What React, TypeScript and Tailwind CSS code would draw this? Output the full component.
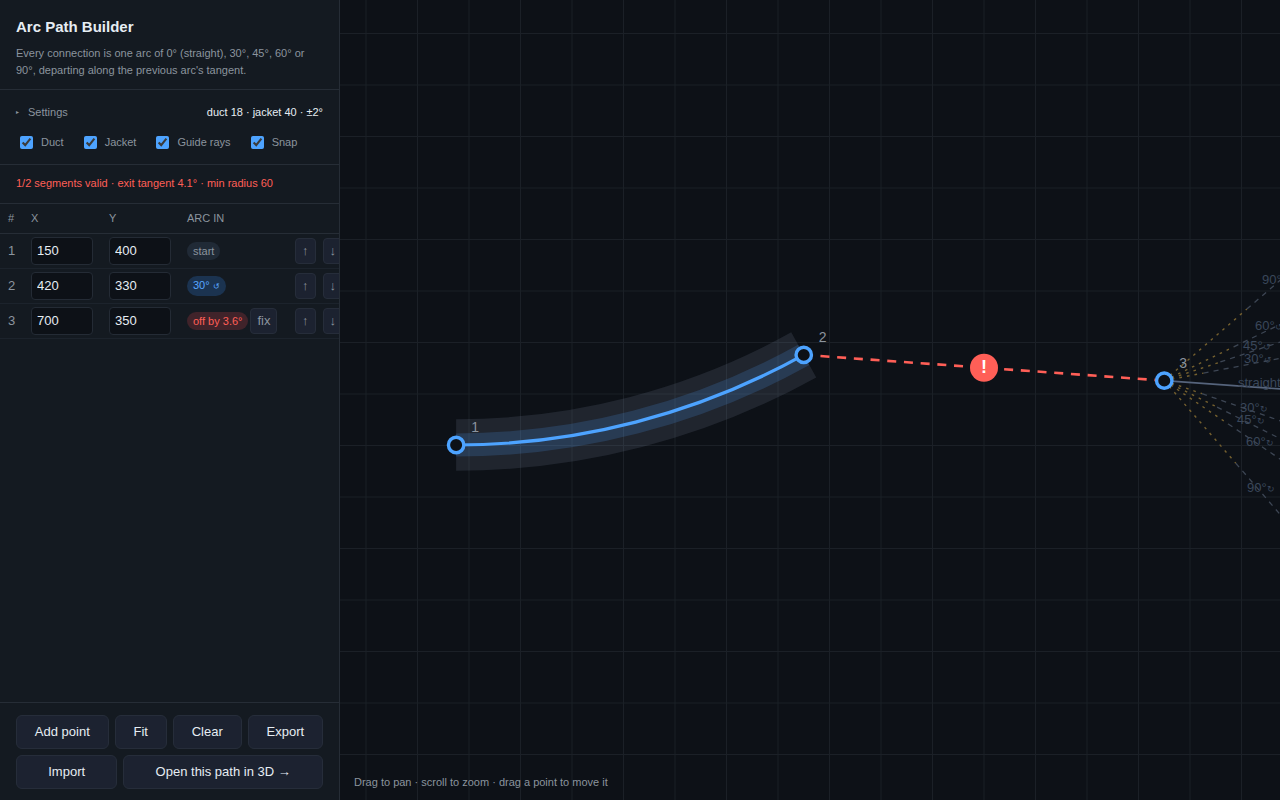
import { useState } from "react";

const SCALE = 51.5 / 40;
const ORIGIN = { x: -77, y: -70 };
const toScreen = (x: number, y: number) => ({
  x: ORIGIN.x + x * SCALE,
  y: ORIGIN.y + y * SCALE,
});

type Row = { x: string; y: string; tag: string; arrow?: string; tone: string; fix?: boolean };

const ROWS: Row[] = [
  { x: "150", y: "400", tag: "start", tone: "bg-[#202a36] text-[#8b949e]" },
  { x: "420", y: "330", tag: "30° ", arrow: "↺", tone: "bg-[#1b3350] text-[#58a6ff]" },
  { x: "700", y: "350", tag: "off by 3.6°", tone: "bg-[#40232a] text-[#ff5f57]", fix: true },
];

const P1 = toScreen(150, 400);
const P2 = toScreen(420, 330);
const P3 = toScreen(700, 350);
const ARC = `M${P1.x} ${P1.y} A715.7 715.7 0 0 0 ${P2.x} ${P2.y}`;
const MID = { x: (P2.x + P3.x) / 2, y: (P2.y + P3.y) / 2 };

const EXIT_ANGLE = 4.1;
const MIN_RADIUS = 60;

const RAYS = [
  { turn: -90, x: 922, y: 284 },
  { turn: -60, x: 915, y: 330 },
  { turn: -45, x: 903, y: 350 },
  { turn: -30, x: 904, y: 363 },
  { turn: 30, x: 900, y: 412 },
  { turn: 45, x: 897, y: 424 },
  { turn: 60, x: 906, y: 446 },
  { turn: 90, x: 907, y: 492 },
];

const along = (degrees: number, distance: number) => {
  const a = (degrees * Math.PI) / 180;
  return { x: P3.x + Math.cos(a) * distance, y: P3.y + Math.sin(a) * distance };
};

function Grid() {
  const lines = Array.from({ length: 60 }, (_, i) => i * 51.5);
  return (
    <g stroke="#1b2027" strokeWidth="1">
      {lines.map((d) => (
        <line key={`v${d}`} x1={26 + d} x2={26 + d} y1="0" y2="100%" />
      ))}
      {lines.map((d) => (
        <line key={`h${d}`} y1={33.5 + d} y2={33.5 + d} x1="0" x2="100%" />
      ))}
    </g>
  );
}

function Rays() {
  const end = along(EXIT_ANGLE, 2000);
  return (
    <g>
      {RAYS.map((r) => {
        const angle = EXIT_ANGLE + r.turn / 2;
        const limit = 2 * MIN_RADIUS * Math.sin((Math.abs(r.turn) * Math.PI) / 360) * SCALE;
        const near = along(angle, limit);
        const far = along(angle, 2000);
        return (
          <g key={r.turn}>
            <line x1={P3.x} y1={P3.y} x2={near.x} y2={near.y} stroke="#75602f" strokeWidth="1.4" strokeDasharray="2.6 5.1" />
            <line x1={near.x} y1={near.y} x2={far.x} y2={far.y} stroke="#3d4654" strokeWidth="1.3" strokeDasharray="5.1 5.1" />
          </g>
        );
      })}
      <line x1={P3.x} y1={P3.y} x2={end.x} y2={end.y} stroke="#56647c" strokeWidth="1.6" />
      <g fill="#3a475a" fontSize="13">
        {RAYS.map((r) => (
          <text key={r.turn} x={r.x} y={r.y}>
            {Math.abs(r.turn)}°<tspan fontSize="9">{r.turn < 0 ? "↺" : "↻"}</tspan>
          </text>
        ))}
        <text x="898" y="387">straight</text>
      </g>
    </g>
  );
}

function Canvas() {
  return (
    <main className="relative min-w-0 flex-1 overflow-hidden bg-[#0d1117]">
      <svg className="block h-full w-full" aria-label="Path canvas">
        <Grid />
        <path d={ARC} fill="none" stroke="#8b9bb4" strokeOpacity="0.15" strokeWidth="51.5" />
        <path d={ARC} fill="none" stroke="#4da3ff" strokeOpacity="0.18" strokeWidth="23.2" />
        <path d={ARC} fill="none" stroke="#4da3ff" strokeWidth="3.2" />
        <line x1={P2.x} y1={P2.y} x2={P3.x} y2={P3.y} stroke="#ff5f57" strokeWidth="2.6" strokeDasharray="9.01 7.73" />
        <circle cx={MID.x} cy={MID.y} r="14" fill="#ff5f57" />
        <text x={MID.x} y={MID.y + 5} fill="#ffffff" fontSize="18" fontWeight="700" textAnchor="middle">!</text>
        <Rays />
        {[P1, P2, P3].map((p, i) => (
          <g key={i}>
            <circle cx={p.x} cy={p.y} r="7.7" fill="#0d1117" stroke="#4da3ff" strokeWidth="3.4" />
            <text x={p.x + 15} y={p.y - 13} fill="#8b949e" fontSize="14">{i + 1}</text>
          </g>
        ))}
      </svg>
      <p className="absolute bottom-[11px] left-3.5 text-[11px] leading-[14px] text-[#8b949e]">
        Drag to pan · scroll to zoom · drag a point to move it
      </p>
    </main>
  );
}

function Check({ label }: { label: string }) {
  const [on, setOn] = useState(true);
  return (
    <label className="flex items-center gap-2">
      <input type="checkbox" checked={on} onChange={() => setOn(!on)} className="size-[13px] accent-[#4da3ff]" />
      {label}
    </label>
  );
}

function NumberInput({ value, label }: { value: string; label: string }) {
  return (
    <input
      type="text"
      defaultValue={value}
      aria-label={label}
      className="block h-7 w-[62px] rounded border border-[#242b35] bg-[#0d1117] px-[5px] text-[13px] text-[#e6edf3]"
    />
  );
}

function SmallButton({ children, label }: { children: string; label: string }) {
  return (
    <button
      type="button"
      aria-label={label}
      className="h-[26px] shrink-0 rounded border border-[#262d3a] bg-[#1c2230] px-1.5 text-[13px] leading-4 text-[#8b949e]"
    >
      {children}
    </button>
  );
}

function PointsTable() {
  return (
    <div className="min-h-0 flex-1 overflow-hidden">
      <table className="w-[352px] table-fixed border-collapse text-left text-[13px]">
        <colgroup>
          <col className="w-[23px]" />
          <col className="w-[78px]" />
          <col className="w-[78px]" />
          <col className="w-[108px]" />
          <col />
        </colgroup>
        <thead>
          <tr className="h-[29px] border-b border-[#262d36] text-[11px] text-[#8b949e]">
            <th className="px-2 font-normal">#</th>
            <th className="px-2 font-normal">X</th>
            <th className="px-2 font-normal">Y</th>
            <th className="px-2 font-normal">ARC IN</th>
            <th aria-label="Actions" />
          </tr>
        </thead>
        <tbody>
          {ROWS.map((r, i) => (
            <tr key={i} className="h-[35px] border-b border-[#1c232c]">
              <td className="px-2 text-[#8b949e]">{i + 1}</td>
              <td className="px-2"><NumberInput value={r.x} label={`Point ${i + 1} X`} /></td>
              <td className="px-2"><NumberInput value={r.y} label={`Point ${i + 1} Y`} /></td>
              <td className="pl-2">
                <div className="flex items-center gap-0.5 whitespace-nowrap">
                  <span className={`rounded-full px-1.5 text-[11px] leading-[18px] ${r.tone}`}>
                    {r.tag}
                    {r.arrow && <span className="text-[8px]">{r.arrow}</span>}
                  </span>
                  {r.fix && <SmallButton label="Fix point 3">fix</SmallButton>}
                </div>
              </td>
              <td className="pl-2">
                <div className="flex gap-[7px]">
                  <SmallButton label="Move up">↑</SmallButton>
                  <SmallButton label="Move down">↓</SmallButton>
                </div>
              </td>
            </tr>
          ))}
        </tbody>
      </table>
    </div>
  );
}

export default function App() {
  return (
    <div className="flex h-screen bg-[#0d1117] font-['Liberation_Sans',Arial,sans-serif] text-[13px] text-[#e6edf3] [color-scheme:dark]">
      <aside className="flex w-[340px] shrink-0 flex-col border-r border-[#262d36] bg-[#141a21]">
        <header className="border-b border-[#262d36] px-4 pt-[18px] pb-2.5">
          <h1 className="text-[15px] leading-[18px] font-bold">Arc Path Builder</h1>
          <p className="mt-[9px] text-[11px] leading-[17px] text-[#8b949e]">
            Every connection is one arc of 0° (straight), 30°, 45°, 60° or 90°, departing along the previous arc's tangent.
          </p>
        </header>
        <section className="border-b border-[#262d36] px-4 py-3.5">
          <button type="button" className="flex w-full items-center justify-between text-[11px] leading-4">
            <span className="flex items-center text-[#8b949e]">
              <span className="w-3 text-left text-[6px]">▸</span>
              Settings
            </span>
            <span>duct 18 · jacket 40 · ±2°</span>
          </button>
          <div className="mt-3.5 flex gap-5 pl-1 text-[11px] leading-4 text-[#8b949e]">
            <Check label="Duct" />
            <Check label="Jacket" />
            <Check label="Guide rays" />
            <Check label="Snap" />
          </div>
        </section>
        <p className="border-b border-[#262d36] px-4 pt-2.5 pb-3 text-[11px] leading-4 text-[#ff5f57]">
          1/2 segments valid · exit tangent 4.1° · min radius 60
        </p>
        <PointsTable />
        <footer className="flex flex-wrap gap-1.5 border-t border-[#262d36] px-4 pt-3 pb-[11px]">
          {["Add point", "Fit", "Clear", "Export", "Import", "Open this path in 3D →"].map((t) => (
            <button
              key={t}
              type="button"
              className="h-[34px] flex-auto rounded-md border border-[#262d3a] bg-[#1c2230] px-3 text-[13px] leading-4"
            >
              {t}
            </button>
          ))}
        </footer>
      </aside>
      <Canvas />
    </div>
  );
}
